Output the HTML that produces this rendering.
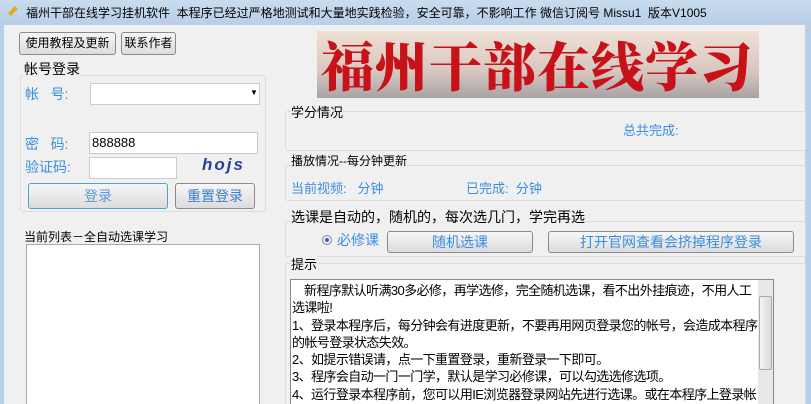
<!DOCTYPE html><html><head><meta charset="utf-8"><style>
*{margin:0;padding:0;box-sizing:border-box}
html{overflow:hidden;width:811px;height:404px}
body{width:811px;height:404px;overflow:hidden;background:#f0f0f0;font-family:"Liberation Sans","Noto Sans CJK SC",sans-serif;font-size:12px;color:#000;position:relative}
.a{position:absolute;white-space:nowrap}
.title{left:0;top:0;width:811px;height:25px;background:linear-gradient(#c9dcef,#b7cfe8);}
.btn{position:absolute;border:1px solid #8a8a8a;border-radius:3px;background:linear-gradient(#f6f6f6,#dcdcdc);text-align:center;font-size:12px}
.blue{color:#3a8ee0}
.inp{position:absolute;background:#fff;border:1px solid #c8ccd2}
.grp{position:absolute;border:1px solid #dcdcdc;border-radius:3px}
</style></head><body>
<div class="a title"></div>
<div class="a" style="left:8px;top:9px;width:10px;height:4px;background:#e9a820;transform:rotate(-45deg)"></div>
<div class="a" style="left:26px;top:4px;font-size:12px">福州干部在线学习挂机软件&nbsp; 本程序已经过严格地测试和大量地实践检验，安全可靠，不影响工作 微信订阅号 Missu1&nbsp; 版本V1005</div>
<div class="a" style="left:0;top:25px;width:4px;height:379px;background:#b7cfe8"></div>
<div class="a" style="left:805px;top:25px;width:6px;height:379px;background:#b7cfe8"></div>
<div class="btn" style="left:19px;top:32px;width:97px;height:23px;line-height:21px">使用教程及更新</div>
<div class="btn" style="left:121px;top:32px;width:55px;height:23px;line-height:21px">联系作者</div>
<div class="grp" style="left:20px;top:75px;width:246px;height:137px"></div>
<div class="a" style="left:24px;top:59px;font-size:14px;background:#f0f0f0">帐号登录</div>
<div class="a blue" style="left:25px;top:84px;font-size:14px">帐&nbsp;&nbsp;&nbsp;号:</div>
<div class="inp" style="left:90px;top:83px;width:170px;height:22px"></div>
<div class="a" style="left:250px;top:88px;font-size:8px">▼</div>
<div class="a blue" style="left:25px;top:134px;font-size:14px">密&nbsp;&nbsp;&nbsp;码:</div>
<div class="inp" style="left:89px;top:132px;width:169px;height:22px"></div>
<div class="a" style="left:92px;top:135px;font-size:13px">888888</div>
<div class="a blue" style="left:25px;top:157px;font-size:14px">验证码:</div>
<div class="inp" style="left:89px;top:157px;width:88px;height:22px"></div>
<div class="a" style="left:202px;top:155px;font-size:17px;font-weight:bold;font-style:italic;color:#2a3f9a;letter-spacing:2px">hojs</div>
<div class="btn blue" style="left:28px;top:183px;width:140px;height:26px;line-height:24px;font-size:14px;border-color:#4aa3d8;color:#5a9bd8">登录</div>
<div class="btn blue" style="left:175px;top:183px;width:80px;height:26px;line-height:24px;font-size:14px;color:#3a7fd0">重置登录</div>
<div class="a" style="left:24px;top:228px;font-size:12px">当前列表－全自动选课学习</div>
<div class="inp" style="left:26px;top:244px;width:234px;height:165px;border-color:#aaa"></div>
<div class="a" style="left:317px;top:31px;width:442px;height:67px;background:linear-gradient(#efe0d6,#d8c7c0 60%,#a8a4a4);overflow:hidden">
<div class="a" style="left:4px;top:0;font-family:'Noto Serif CJK SC',serif;font-weight:900;font-size:53px;line-height:66px;color:#c8121a;letter-spacing:1px">福州干部在线学习</div></div>
<div class="grp" style="left:285px;top:111px;width:521px;height:40px"></div>
<div class="a" style="left:291px;top:102px;font-size:13px;background:#f0f0f0">学分情况</div>
<div class="a blue" style="left:623px;top:120px;font-size:13px">总共完成:</div>
<div class="grp" style="left:285px;top:165px;width:521px;height:36px"></div>
<div class="a" style="left:291px;top:152px;font-size:12px;background:#f0f0f0">播放情况--每分钟更新</div>
<div class="a blue" style="left:291px;top:178px;font-size:13px">当前视频:&nbsp;&nbsp;&nbsp;分钟</div>
<div class="a blue" style="left:466px;top:178px;font-size:13px">已完成:&nbsp;&nbsp;分钟</div>
<div class="grp" style="left:285px;top:221px;width:521px;height:36px"></div>
<div class="a" style="left:291px;top:207px;font-size:14px;background:#f0f0f0">选课是自动的，随机的，每次选几门，学完再选</div>
<div class="a" style="left:322px;top:235px;width:10px;height:10px;border-radius:50%;border:1px solid #888;background:radial-gradient(#2a5ea8 30%,#e8eef6 40%)"></div>
<div class="a blue" style="left:337px;top:230px;font-size:14px">必修课</div>
<div class="btn blue" style="left:387px;top:231px;width:146px;height:22px;line-height:20px;font-size:14px">随机选课</div>
<div class="btn blue" style="left:548px;top:231px;width:246px;height:22px;line-height:20px;font-size:14px">打开官网查看会挤掉程序登录</div>
<div class="grp" style="left:285px;top:263px;width:521px;height:150px"></div>
<div class="a" style="left:291px;top:254px;font-size:13px;background:#f0f0f0">提示</div>
<div class="inp" style="left:290px;top:279px;width:484px;height:130px;border-color:#888"></div>
<div class="a" style="left:758px;top:280px;width:15px;height:124px;background:#e8e8e8"></div>
<div class="a" style="left:759px;top:296px;width:13px;height:74px;background:linear-gradient(90deg,#f4f4f4,#dadada);border:1px solid #aaa;border-radius:2px"></div>
<div class="a" style="left:292px;top:282px;width:466px;white-space:normal;font-size:13px;line-height:17.3px;letter-spacing:-0.6px">&nbsp;&nbsp;&nbsp;&nbsp;新程序默认听满30多必修，再学选修，完全随机选课，看不出外挂痕迹，不用人工选课啦!<br>1、登录本程序后，每分钟会有进度更新，不要再用网页登录您的帐号，会造成本程序的帐号登录状态失效。<br>2、如提示错误请，点一下重置登录，重新登录一下即可。<br>3、程序会自动一门一门学，默认是学习必修课，可以勾选选修选项。<br>4、运行登录本程序前，您可以用IE浏览器登录网站先进行选课。或在本程序上登录帐号后，剩下的交给程序了。</div>
</body></html>
